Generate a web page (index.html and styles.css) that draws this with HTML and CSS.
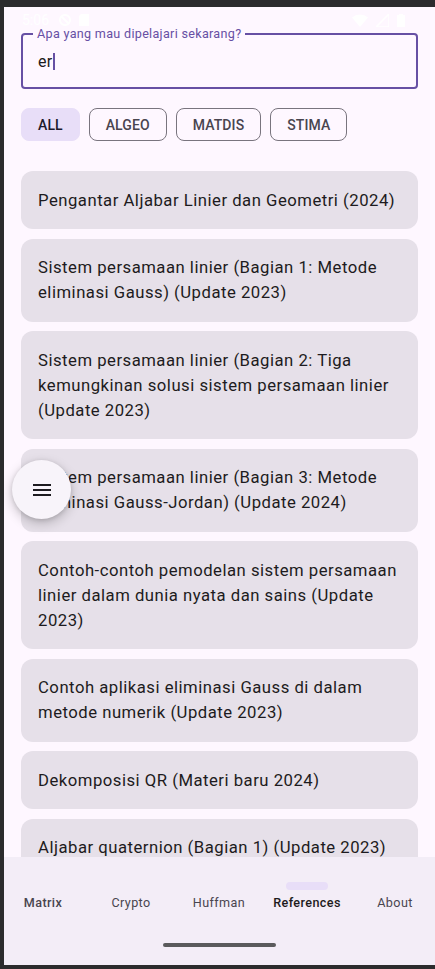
FILE: index.html
```html
<!DOCTYPE html>
<html lang="id">
<head>
<meta charset="utf-8">
<link rel="stylesheet" href="styles.css">
</head>
<body>
<div class="screen">
  <div class="status">
    <span class="time">5:06</span>
    <svg class="st-ic" width="12" height="14" viewBox="0 0 12 14"><circle cx="6" cy="7" r="5" fill="none" stroke="#fff" stroke-width="2"/><line x1="2" y1="3" x2="10" y2="11" stroke="#fff" stroke-width="2"/></svg>
    <svg class="st-ic" width="10" height="13" viewBox="0 0 10 13"><path d="M2 0h8v13H0V2z" fill="#fff"/></svg>
    <span class="spacer"></span>
    <svg class="st-ic" width="16" height="13" viewBox="0 0 16 13"><path d="M0 3.5A12 12 0 0 1 16 3.5L8 13z" fill="#fff"/></svg>
    <svg class="st-ic" width="13" height="13" viewBox="0 0 13 13"><path d="M13 0v13H0z" fill="none" stroke="#fff" stroke-width="1.5"/></svg>
    <svg class="st-ic" width="8" height="14" viewBox="0 0 8 14"><path d="M2 1h4v1h2v12H0V2h2z" fill="#fff"/></svg>
  </div>

  <div class="field">
    <span class="field-label">Apa yang mau dipelajari sekarang?</span>
    <span class="field-text">er</span><span class="caret"></span>
  </div>

  <div class="chips">
    <span class="chip chip-active">ALL</span>
    <span class="chip">ALGEO</span>
    <span class="chip">MATDIS</span>
    <span class="chip">STIMA</span>
  </div>

  <div class="list">
    <div class="card">Pengantar Aljabar Linier dan Geometri (2024)</div>
    <div class="card">Sistem persamaan linier (Bagian 1: Metode eliminasi Gauss) (Update 2023)</div>
    <div class="card">Sistem persamaan linier (Bagian 2: Tiga kemungkinan solusi sistem persamaan linier (Update 2023)</div>
    <div class="card">Sistem persamaan linier (Bagian 3: Metode eliminasi Gauss-Jordan) (Update 2024)</div>
    <div class="card">Contoh-contoh pemodelan sistem persamaan linier dalam dunia nyata dan sains (Update 2023)</div>
    <div class="card">Contoh aplikasi eliminasi Gauss di dalam metode numerik (Update 2023)</div>
    <div class="card">Dekomposisi QR (Materi baru 2024)</div>
    <div class="card">Aljabar quaternion (Bagian 1) (Update 2023)</div>
    <div class="card">Aljabar quaternion (Bagian 2) (Update 2023)</div>
  </div>

  <button class="fab" aria-label="menu">
    <svg width="18" height="14" viewBox="0 0 18 14"><rect x="0" y="1" width="18" height="2" fill="#1d1b20"/><rect x="0" y="6" width="18" height="2" fill="#1d1b20"/><rect x="0" y="11" width="18" height="2" fill="#1d1b20"/></svg>
  </button>

  <nav class="nav">
    <div class="nav-items">
      <div class="nav-item nav-strong"><span class="pill-space"></span><span class="nav-label">Matrix</span></div>
      <div class="nav-item"><span class="pill-space"></span><span class="nav-label">Crypto</span></div>
      <div class="nav-item"><span class="pill-space"></span><span class="nav-label">Huffman</span></div>
      <div class="nav-item nav-active"><span class="pill"></span><span class="nav-label">References</span></div>
      <div class="nav-item"><span class="pill-space"></span><span class="nav-label">About</span></div>
    </div>
    <div class="home-bar"></div>
  </nav>
</div>
</body>
</html>
```

FILE: styles.css
```css
* { box-sizing: border-box; }
html, body { margin: 0; padding: 0; }
body {
  background: #2b2b2d;
  width: 435px;
  height: 969px;
  overflow: hidden;
  font-family: Roboto, "Noto Sans", sans-serif;
}
.screen {
  position: relative;
  margin: 7px 0 0 4px;
  width: 431px;
  height: 958px;
  background: #fef7ff;
  display: flex;
  flex-direction: column;
  overflow: hidden;
}
.status {
  height: 26px;
  display: flex;
  align-items: center;
  padding: 0 30px 0 18px;
  gap: 8px;
  color: #fff;
  font-size: 14px;
}
.time { margin-right: 2px; }
.spacer { flex: 1; }
.st-ic { display: block; }

.field {
  position: relative;
  margin: 0 17px;
  height: 56px;
  border: 2px solid #6750a4;
  border-radius: 4px;
  display: flex;
  align-items: center;
  padding-left: 15px;
}
.field-label {
  position: absolute;
  top: -9px;
  left: 10px;
  padding: 0 4px;
  background: #fef7ff;
  color: #6750a4;
  font-size: 12.6px;
  line-height: 16px;
  letter-spacing: 0.3px;
}
.field-text {
  font-size: 16px;
  color: #1d1b20;
  letter-spacing: 0.3px;
}
.caret {
  display: inline-block;
  width: 2px;
  height: 17px;
  background: #6750a4;
}

.chips {
  display: flex;
  gap: 9px;
  margin: 19px 17px 0;
}
.chip {
  height: 33px;
  display: flex;
  align-items: center;
  padding: 0 16px;
  border: 1px solid #79747e;
  border-radius: 8px;
  font-size: 14px;
  font-weight: 500;
  color: #49454f;
  letter-spacing: 0.1px;
}
.chip-active {
  background: #e8def8;
  border-color: #e8def8;
  color: #1d192b;
}

.list {
  flex: 1;
  min-height: 0;
  overflow: hidden;
  padding: 30px 17px 0;
  display: flex;
  flex-direction: column;
  gap: 9.5px;
}
.card {
  flex-shrink: 0;
  background: #e6e0e9;
  border-radius: 12px;
  padding: 16.5px 14px 16.5px 17px;
  font-size: 16.7px;
  line-height: 25px;
  letter-spacing: 0.5px;
  color: #1d1b20;
}

.fab {
  position: absolute;
  left: 8px;
  top: 453px;
  width: 59px;
  height: 59px;
  border-radius: 50%;
  border: none;
  background: #f8f4fa;
  box-shadow: 0 4px 12px rgba(0,0,0,0.22), 0 1px 4px rgba(0,0,0,0.12);
  display: flex;
  align-items: center;
  justify-content: center;
  padding: 0;
}

.nav {
  position: absolute;
  left: 0;
  bottom: 0;
  width: 431px;
  height: 108px;
  background: #f3edf7;
}
.nav-items {
  display: grid;
  grid-template-columns: repeat(5, 84px);
  margin-left: -3px;
  column-gap: 4px;
  padding-top: 25px;
}
.nav-item {
  display: flex;
  flex-direction: column;
  align-items: center;
}
.pill, .pill-space {
  width: 42px;
  height: 8px;
  border-radius: 4px;
}
.pill { background: #e8def8; }
.nav-label {
  margin-top: 5px;
  font-size: 12.6px;
  line-height: 16px;
  font-weight: 400;
  color: #49454f;
  letter-spacing: 0.4px;
}
.nav-strong .nav-label { font-weight: 500; }
.nav-active .nav-label { color: #1d1b20; font-weight: 500; }
.home-bar {
  position: absolute;
  left: 159px;
  top: 86px;
  width: 113px;
  height: 4px;
  border-radius: 2px;
  background: #5a5a5c;
}
```
